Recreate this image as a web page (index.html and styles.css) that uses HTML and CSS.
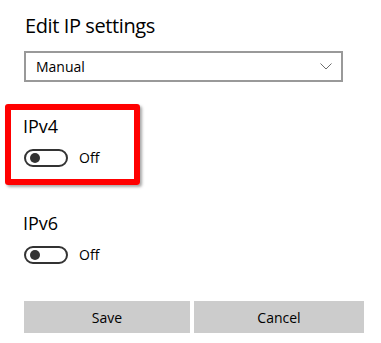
FILE: index.html
```html
<!DOCTYPE html>
<html>
<head>
<meta charset="utf-8">
<link rel="stylesheet" href="styles.css">
</head>
<body>
<div class="panel">
  <h1 class="title">Edit IP settings</h1>
  <div class="select">
    <span class="select-value">Manual</span>
    <svg class="chevron" width="12" height="7" viewBox="0 0 12 7"><path d="M0.5 0.5 L6 6 L11.5 0.5" fill="none" stroke="#6d6d6d" stroke-width="1"/></svg>
  </div>
  <div class="section first">
    <div class="label">IPv4</div>
    <div class="toggle-row">
      <span class="toggle"><span class="knob"></span></span>
      <span class="state">Off</span>
    </div>
  </div>
  <div class="section">
    <div class="label">IPv6</div>
    <div class="toggle-row">
      <span class="toggle"><span class="knob"></span></span>
      <span class="state">Off</span>
    </div>
  </div>
  <div class="buttons">
    <button class="btn">Save</button>
    <button class="btn">Cancel</button>
  </div>
  <div class="highlight"></div>
</div>
</body>
</html>
```
FILE: styles.css
```css
* { box-sizing: border-box; }
html, body { margin: 0; padding: 0; background: #fff; }
body { font-family: "Open Sans", "Noto Sans", sans-serif; color: #000; }
.panel { position: relative; width: 381px; height: 343px; padding: 12px 0 0 24px; }
.title { margin: 0 0 0 1px; font-size: 20px; line-height: 28px; font-weight: 400; letter-spacing: -0.4px; }
.select {
  margin-top: 11px; width: 319px; height: 31px; border: 2px solid #999;
  display: flex; align-items: center; justify-content: space-between;
  padding: 0 9px 0 10px;
}
.select-value { font-size: 14px; line-height: 18px; }
.chevron { display: block; }
.section { margin-top: 44px; }
.section.first { margin-top: 32px; }
.label { font-size: 18px; line-height: 24px; margin-left: -1px; }
.toggle-row { margin-top: 11px; display: flex; align-items: center; height: 18px; }
.toggle {
  width: 44px; height: 18px; border: 2px solid #333; border-radius: 9px;
  display: flex; align-items: center; padding-left: 4px;
}
.knob { width: 10px; height: 10px; border-radius: 50%; background: #333; }
.state { margin-left: 11px; font-size: 14px; line-height: 18px; }
.buttons { margin-top: 37px; display: flex; gap: 4px; }
.btn {
  width: 166px; height: 32px; border: 0; background: #ccc; color: #000;
  font-family: "Open Sans", "Noto Sans", sans-serif; font-size: 14px; padding: 0;
}
.btn + .btn { width: 170px; }
.highlight {
  position: absolute; left: 5px; top: 104px; width: 135px; height: 81px;
  border: 6px solid #f00; border-radius: 3px;
  box-shadow: 2px 2px 3px rgba(0,0,0,0.35);
}
```
